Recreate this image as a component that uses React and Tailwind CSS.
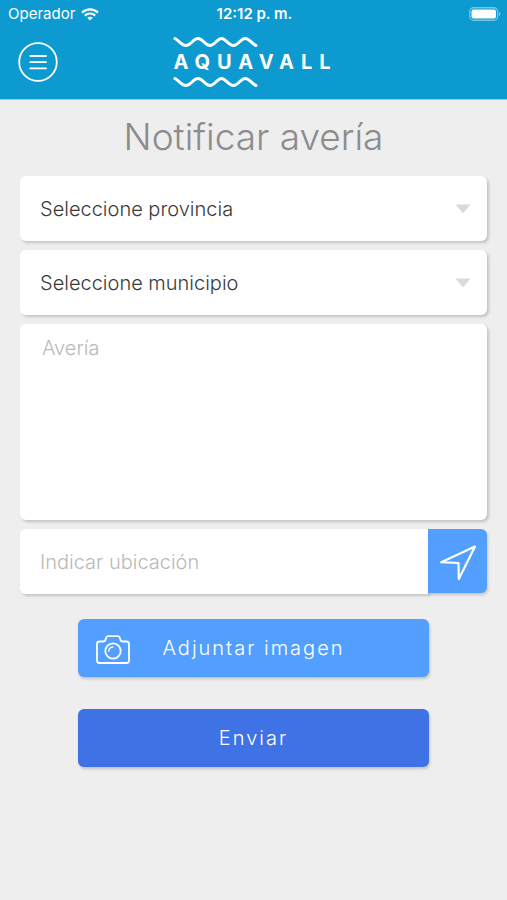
// src/App.jsx
import { useState } from "react";

const provincias = ["Ávila", "Burgos", "León", "Palencia", "Salamanca", "Segovia", "Soria", "Valladolid", "Zamora"];
const municipios = ["Íscar", "Medina del Campo", "Olmedo", "Peñafiel", "Tordesillas"];

const fieldShadow = "shadow-[2px_2px_3px_rgba(0,0,0,0.18)]";
const buttonShadow = "shadow-[1px_2px_3px_rgba(0,0,0,0.18)]";

function Wave() {
  return (
    <svg viewBox="0 0 86 12" className="w-[86px] h-3" fill="none" stroke="white" strokeWidth="3" strokeLinecap="round" aria-hidden="true">
      <path d="M2 2.5C6 4.5 8 9.5 13 9.5S20 2.4 25 2.4S32 9.5 37 9.5S44 2.4 48.5 2.4S55.5 9.5 60.5 9.5S67.5 2.4 72 2.4S79 8 83 9.5" />
    </svg>
  );
}

function StatusBar() {
  return (
    <div className="grid grid-cols-3 items-center h-7 pl-2 pr-1.5 text-[15px] leading-7 font-normal">
      <div className="flex items-center gap-1.5">
        <span>Operador</span>
        <svg viewBox="0 0 18 13" className="w-[18px] h-[13px]" fill="none" stroke="white" strokeWidth="2.2" aria-hidden="true">
          <path d="M1 4.6C5.5 0.3 12.5 0.3 17 4.6" />
          <path d="M3.8 7.6C6.8 4.8 11.2 4.8 14.2 7.6" />
          <path d="M9 12.6L6.2 9.8C7.8 8.4 10.2 8.4 11.8 9.8Z" fill="white" stroke="none" />
        </svg>
      </div>
      <span className="text-center font-semibold whitespace-nowrap">12:12 p. m.</span>
      <svg viewBox="0 0 32 14" className="justify-self-end w-8 h-3.5" aria-hidden="true">
        <rect x="0.75" y="0.75" width="28" height="12.5" rx="4" fill="none" stroke="white" strokeOpacity="0.45" strokeWidth="1.3" />
        <rect x="2.5" y="2.5" width="24.5" height="9" rx="2" fill="white" />
        <path d="M30.2 5C31.8 5.6 31.8 8.4 30.2 9Z" fill="white" fillOpacity="0.5" />
      </svg>
    </div>
  );
}

function Header() {
  return (
    <header className="bg-[#0d9ad0] text-white border-b border-[#8fd0ea]">
      <StatusBar />
      <div className="grid grid-cols-[1fr_auto_1fr] items-center px-[18px] pt-2 pb-[11px]">
        <button type="button" aria-label="Menú" className="w-10 h-10">
          <svg viewBox="0 0 40 40" className="w-10 h-10" fill="none" stroke="white" strokeLinecap="round" aria-hidden="true">
            <circle cx="20" cy="20" r="18.8" strokeWidth="1.8" />
            <path d="M12.3 14H28M12.3 20.2H28M12.3 26.4H28" strokeWidth="1.8" />
          </svg>
        </button>
        {/* Logo */}
        <div className="flex flex-col pl-1">
          <Wave />
          <span className="h-7 text-xl leading-7 font-bold tracking-[7px]">AQUAVALL</span>
          <Wave />
        </div>
      </div>
    </header>
  );
}

function SelectField({ label, options }) {
  const [value, setValue] = useState("");

  return (
    <label className="relative block">
      <select
        aria-label={label}
        value={value}
        onChange={(e) => setValue(e.target.value)}
        className={`block w-full h-[65px] px-5 appearance-none rounded-md bg-white text-xl text-[#3a3a3a] ${fieldShadow}`}
      >
        <option value="">{label}</option>
        {options.map((option) => (
          <option key={option} value={option}>{option}</option>
        ))}
      </select>
      <svg viewBox="0 0 16 10" className="absolute right-4 top-7 w-4 h-2.5 pointer-events-none" fill="#dadada" aria-hidden="true">
        <path d="M0.5 0.5H15.5L8 9.5Z" />
      </svg>
    </label>
  );
}

export default function App() {
  return (
    <div className="min-h-screen bg-[#eeeeee] font-['Inter',sans-serif] font-light">
      <Header />

      <main className="px-5 pt-3 pb-10">
        <h1 className="text-[37px] leading-[50px] text-center text-[#8c8c8c] mb-[14px]">Notificar avería</h1>

        <form className="flex flex-col gap-[9px]" onSubmit={(e) => e.preventDefault()}>
          <SelectField label="Seleccione provincia" options={provincias} />
          <SelectField label="Seleccione municipio" options={municipios} />

          <textarea
            aria-label="Avería"
            placeholder="Avería"
            className={`block w-full h-[196px] px-[22px] py-2.5 resize-none rounded-md bg-white text-xl placeholder:text-[#b9b9b9] ${fieldShadow}`}
          />

          {/* Ubicación */}
          <div className="flex items-start">
            <input
              type="text"
              aria-label="Indicar ubicación"
              placeholder="Indicar ubicación"
              className={`flex-1 min-w-0 h-[65px] px-5 rounded-l-md bg-white text-xl placeholder:text-[#b9b9b9] ${fieldShadow}`}
            />
            <button
              type="button"
              aria-label="Usar mi ubicación"
              className={`relative w-[59px] h-16 pt-1 flex items-center justify-center rounded-r-md bg-[#529fff] ${buttonShadow}`}
            >
              <svg viewBox="0 0 36 36" className="w-9 h-9" fill="none" stroke="white" strokeWidth="2.2" strokeLinejoin="round" aria-hidden="true">
                <path d="M35 1.5L1.2 17.2L18.5 18L18.8 34Z" />
              </svg>
            </button>
          </div>

          <div className="flex flex-col gap-8 w-3/4 mx-auto pt-4 text-xl tracking-widest text-white">
            <button type="button" className={`relative h-[58px] rounded-md bg-[#529fff] ${buttonShadow}`}>
              <svg viewBox="0 0 34 30" className="absolute left-[18px] top-4 w-[34px] h-[30px]" fill="none" stroke="white" strokeWidth="1.8" strokeLinejoin="round" aria-hidden="true">
                <path d="M3.5 6.5H7C8.5 6.5 9.3 5.8 9.6 4.5L10 3C10.3 1.6 11 1.2 12.2 1.2H21.8C23 1.2 23.7 1.6 24 3L24.4 4.5C24.7 5.8 25.5 6.5 27 6.5H30.5C32.2 6.5 33 7.3 33 9V25.5C33 27.2 32.2 28 30.5 28H3.5C1.8 28 1 27.2 1 25.5V9C1 7.3 1.8 6.5 3.5 6.5Z" />
                <circle cx="17" cy="16" r="7.7" />
                <path d="M12.8 16.2C12.9 13.8 14.4 12.2 16.8 12" strokeWidth="1.3" strokeLinecap="round" />
              </svg>
              Adjuntar imagen
            </button>
            <button type="submit" className={`h-[58px] rounded-md bg-[#3f72e5] ${buttonShadow}`}>
              Enviar
            </button>
          </div>
        </form>
      </main>
    </div>
  );
}
